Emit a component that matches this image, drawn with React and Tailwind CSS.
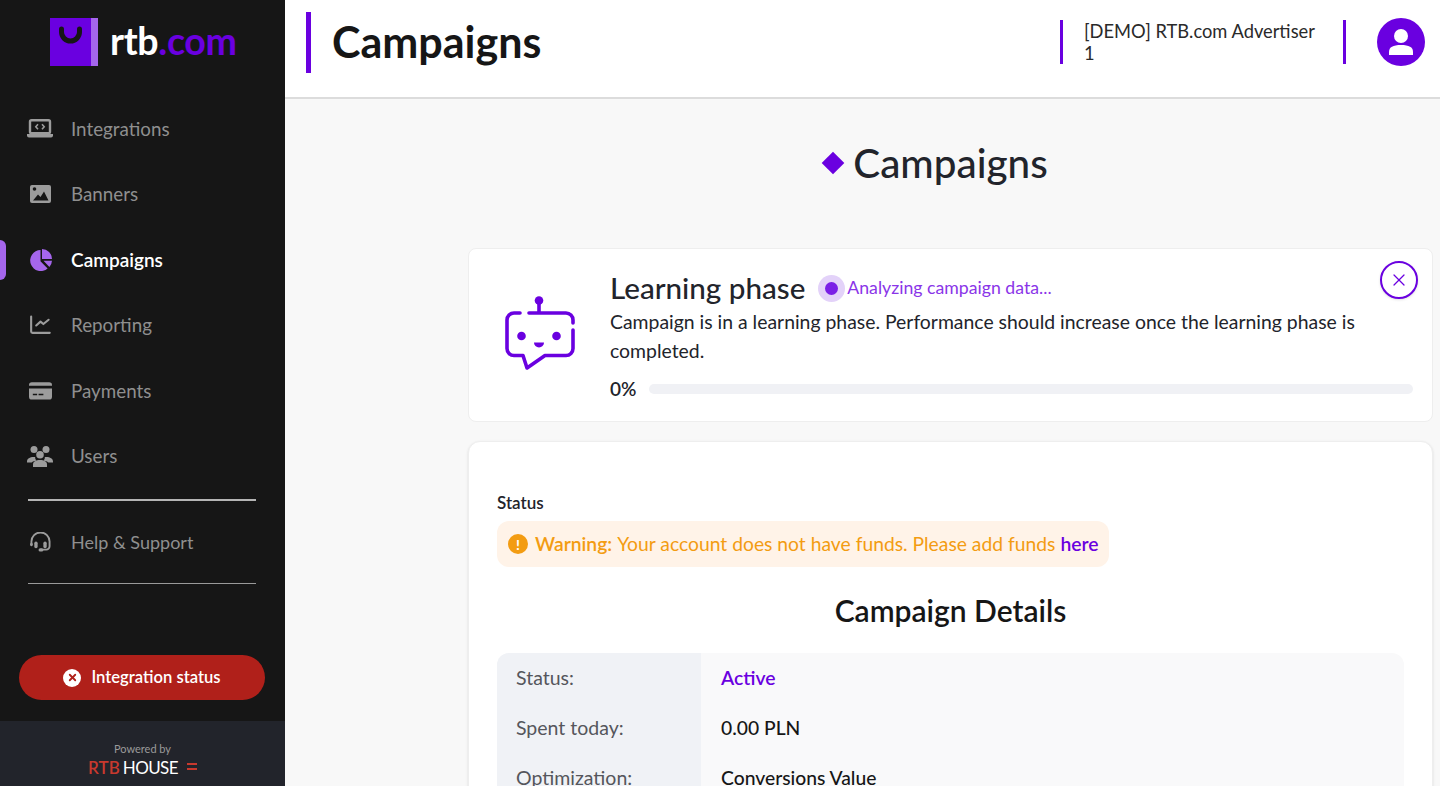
import { X } from 'lucide-react';

const font = { fontFamily: 'Lato, "Noto Sans", sans-serif' };

function LaptopIcon() {
  return (
    <svg width="26" height="19" viewBox="0 0 26 19" fill="none" stroke="currentColor">
      <rect x="3" y="1.200" width="20" height="13" rx="1.500" strokeWidth="2.400" />
      <path d="M11 5.200 8.800 7.700l2.200 2.500M15 5.200l2.200 2.500-2.200 2.500" strokeWidth="1.600" />
      <path d="M0 15h26v1.500a2 2 0 0 1-2 2H2a2 2 0 0 1-2-2z" fill="currentColor" stroke="none" />
    </svg>
  );
}

function ImageIcon() {
  return (
    <svg width="21" height="18" viewBox="0 0 21 18" className="ml-[3px]">
      <rect width="21" height="18" rx="2" fill="currentColor" />
      <circle cx="4.500" cy="4" r="1.800" fill="#161616" />
      <path d="M3 15.500 8 9.500l2.500 2.500 3.500-5.500 4.500 9z" fill="#161616" />
    </svg>
  );
}

function PieIcon() {
  return (
    <svg width="22" height="22" viewBox="0 0 22 22" fill="#a566ec" className="ml-[3px]">
      <path d="M10.500 1A10.500 10.500 0 1 0 17.600 19.400L10.500 12.300z" />
      <path d="M12 0A10 10 0 0 1 22 10H12z" />
      <path d="M13.500 11.800H22A10 10 0 0 1 19.400 18z" />
    </svg>
  );
}

function ChartIcon() {
  return (
    <svg width="21" height="20" viewBox="0 0 22 20" fill="none" stroke="currentColor" strokeWidth="2.200" strokeLinecap="round" strokeLinejoin="round" className="ml-[3px]">
      <path d="M1.200 1.200v15.500a1.500 1.500 0 0 0 1.500 1.500h18" />
      <path d="M6.500 10.500 11 6.500l3 2.500 5.500-4.500" />
    </svg>
  );
}

function CardIcon() {
  return (
    <svg width="23" height="19" viewBox="0 0 24 19" className="ml-[2px]">
      <path d="M0 4a3 3 0 0 1 3-3h18a3 3 0 0 1 3 3v.500H0z" fill="currentColor" />
      <path d="M0 7.500h24V16a3 3 0 0 1-3 3H3a3 3 0 0 1-3-3z" fill="currentColor" />
      <path d="M4 13h4.500v1.500H4zM10 13h5v1.500h-5z" fill="#161616" />
    </svg>
  );
}

function UsersIcon() {
  return (
    <svg width="26" height="21" viewBox="0 0 26 21" fill="currentColor">
      <circle cx="7" cy="3.500" r="3.500" />
      <circle cx="19" cy="3.500" r="3.500" />
      <circle cx="13" cy="8.800" r="3.800" />
      <path d="M6 21v-2.500c0-3 3-4.500 7-4.500s7 1.500 7 4.500V21z" />
      <path d="M0 15.500c0-3 3-4.500 6.500-4.500h1.700c-.2 1.500.3 2.700 1.300 3.500-2.200.5-3.700 1-4.800 2H0z" />
      <path d="M26 15.500c0-3-3-4.500-6.500-4.500h-1.700c.2 1.500-.3 2.700-1.300 3.500 2.200.5 3.700 1 4.800 2H26z" />
    </svg>
  );
}

function HeadsetIcon() {
  return (
    <svg width="21" height="21" viewBox="0 0 22 22" fill="none" stroke="currentColor" strokeWidth="2" strokeLinecap="round" className="ml-[3px]">
      <path d="M1.500 14v-4a9.500 9.500 0 0 1 19 0v5a3.500 3.500 0 0 1-3.500 3.500h-5" />
      <circle cx="1.500" cy="13" r="0.500" />
      <rect x="4.500" y="10" width="3.500" height="7" rx="1.700" fill="currentColor" stroke="none" />
      <rect x="14" y="10" width="3.500" height="7" rx="1.700" fill="currentColor" stroke="none" />
      <rect x="9" y="17" width="5" height="3.500" rx="1.700" fill="currentColor" stroke="none" />
    </svg>
  );
}

const navItems = [
  { label: 'Integrations', icon: <LaptopIcon /> },
  { label: 'Banners', icon: <ImageIcon /> },
  { label: 'Campaigns', icon: <PieIcon />, active: true },
  { label: 'Reporting', icon: <ChartIcon /> },
  { label: 'Payments', icon: <CardIcon /> },
  { label: 'Users', icon: <UsersIcon /> },
];

function NavItem({ item }) {
  return (
    <div className={`relative flex h-[65.5px] items-center pl-[27px] ${item.active ? 'text-[19px] font-semibold text-white' : 'text-[18.8px] text-[#8f8f8f]'}`}>
      {item.active && <div className="absolute left-0 top-[13px] h-10 w-[6px] rounded-r-md bg-[#a566ec]" />}
      <span className="flex w-[44px] shrink-0 items-center text-[#9c9c9c]">{item.icon}</span>
      {item.label}
    </div>
  );
}

function Sidebar() {
  return (
    <aside className="flex h-full w-[285px] shrink-0 flex-col bg-[#161616]">
      <div className="flex h-[96.2px] items-start gap-[12px] pl-[50px] pt-[18px]">
        <svg width="48" height="48" viewBox="0 0 48 48">
          <rect width="48" height="48" fill="#6a00e0" />
          <rect x="41" width="7" height="48" fill="#a566ec" />
          <path d="M11.500 11v3a9 9 0 0 0 18 0v-3" fill="none" stroke="#161616" strokeWidth="5" strokeLinecap="round" />
        </svg>
        <span className="mt-px text-[37.5px] font-bold leading-[44px] tracking-[-0.3px] text-white">
          rtb<span className="text-[#6a00e0]">.com</span>
        </span>
      </div>
      <nav>
        {navItems.map((item) => (
          <NavItem key={item.label} item={item} />
        ))}
      </nav>
      <div className="ml-7 mr-[29px] mt-[10px] h-[2px] bg-[#b5b5b5]" />
      <div className="flex h-[82px] items-center pl-[27px] text-[18px] text-[#8f8f8f]">
        <span className="flex w-[44px] shrink-0 items-center text-[#9c9c9c]">
          <HeadsetIcon />
        </span>
        Help &amp; Support
      </div>
      <div className="ml-7 mr-[29px] h-px bg-[#9a9a9a]" />
      <div className="flex flex-1 items-end justify-center pb-[21px] pr-px">
        <div className="flex h-[45px] w-[246px] items-center justify-center gap-[10px] rounded-full bg-[#b0201a] text-[16.6px] font-semibold text-white">
          <span className="flex h-[18px] w-[18px] items-center justify-center rounded-full bg-white">
            <X size={11} strokeWidth={4} className="text-[#b0201a]" />
          </span>
          Integration status
        </div>
      </div>
      <div className="flex h-[65px] flex-col items-center bg-[#22242b] pt-[22px]">
        <span className="text-[11px] leading-[12px] text-[#9a9a9a]">Powered by</span>
        <div className="mt-[2px] flex items-center text-[17px] leading-[22px]">
          <span className="font-semibold text-[#c8392e]">RTB</span>
          <span className="ml-[3px] tracking-[-0.6px] text-white">HOUSE</span>
          <span className="mb-[4px] ml-[9px] flex flex-col gap-[3px]">
            <span className="h-[2px] w-[10px] bg-[#c8392e]" />
            <span className="h-[2px] w-[10px] bg-[#c8392e]" />
          </span>
        </div>
      </div>
    </aside>
  );
}

function Header() {
  return (
    <header className="flex h-[99px] shrink-0 items-center border-b-2 border-[#dcdcdc] bg-white pb-[13px] pl-[21px] pr-[15px]">
      <div className="h-[61px] w-[5px] bg-[#6a00e0]" />
      <h1 className="ml-[21px] flex-1 text-[43px] font-bold text-[#161616]">Campaigns</h1>
      <div className="h-11 w-[3px] bg-[#6a00e0]" />
      <div className="ml-[21px] w-[233px] text-[18.3px] leading-[22px] text-[#2a2a2a]">
        [DEMO] RTB.com Advertiser 1
      </div>
      <div className="ml-[26px] h-11 w-[3px] bg-[#6a00e0]" />
      <div className="ml-[31px] flex h-12 w-12 items-center justify-center rounded-full bg-[#6a00e0]">
        <svg width="26" height="28" viewBox="0 0 26 28" fill="white">
          <circle cx="13" cy="8" r="7" />
          <path d="M1 27v-3c0-5 4-7 12-7s12 2 12 7v3z" />
        </svg>
      </div>
    </header>
  );
}

function BotIcon() {
  return (
    <svg width="70" height="74" viewBox="0 0 70 74" fill="none" stroke="#6a00e0" strokeWidth="3.600" strokeLinecap="round" strokeLinejoin="round">
      <circle cx="34" cy="4.500" r="4.300" fill="#6a00e0" stroke="none" />
      <path d="M34 8v8" />
      <path d="M15 17H9a7 7 0 0 0-7 7v28.500a7 7 0 0 0 7 7h9L22 72l18-12.500h21a7 7 0 0 0 7-7V34" />
      <path d="M24 17h37a7 7 0 0 1 7 7v3" />
      <circle cx="16.500" cy="40" r="4.300" fill="#6a00e0" stroke="none" />
      <circle cx="51.500" cy="40" r="4.300" fill="#6a00e0" stroke="none" />
      <path d="M29 46.500h10a5 5 0 0 1-10 0z" fill="#6a00e0" stroke="none" />
    </svg>
  );
}

function LearningCard() {
  return (
    <section className="relative flex h-[174px] rounded-lg border border-[#eeeeee] bg-white pl-[36px]">
      <div className="w-[105px] shrink-0 pt-[47px]">
        <BotIcon />
      </div>
      <div className="flex-1 pr-[19px] pt-[20px]">
        <div className="flex h-[38px] items-center">
          <h3 className="text-[29.6px] font-medium text-[#22242b]">Learning phase</h3>
          <span className="ml-[13px] flex h-[27px] w-[27px] items-center justify-center rounded-full bg-[#e3d2f9]">
            <span className="h-[13px] w-[13px] rounded-full bg-[#7a1fe6]" />
          </span>
          <span className="ml-[2px] text-[17.7px] text-[#8a35e8]">Analyzing campaign data...</span>
        </div>
        <p className="text-[19.4px] leading-[29px] text-[#22242b]">
          Campaign is in a learning phase. Performance should increase once the learning phase is completed.
        </p>
        <div className="mt-[10px] flex items-center">
          <span className="w-[39px] text-[19px] font-semibold text-[#22242b]">0%</span>
          <div className="h-[10px] flex-1 rounded-full bg-[#f0f1f5]" />
        </div>
      </div>
      <button className="absolute right-[14px] top-[12px] flex h-[38px] w-[38px] items-center justify-center rounded-full border-[2.5px] border-[#6a00e0] bg-white text-[#6a00e0] shadow-sm">
        <X size={20} strokeWidth={1.5} />
      </button>
    </section>
  );
}

const rows = [
  { label: 'Status:', value: 'Active', cls: 'font-semibold text-[#6a00e0]' },
  { label: 'Spent today:', value: '0.00 PLN', cls: 'font-medium text-[#161616]' },
  { label: 'Optimization:', value: 'Conversions Value', cls: 'font-medium text-[#161616]' },
];

function DetailsCard() {
  return (
    <section className="mt-[19px] rounded-t-xl border border-[#eeeeee] bg-white px-[28px] pb-10 pt-[51px] shadow-sm">
      <div className="text-[17px] font-semibold leading-5 text-[#22242b]">Status</div>
      <div className="mt-2 flex h-[46px] w-[612px] items-center rounded-xl bg-[#fff3e8] pl-[11px] text-[19.3px] text-[#f39c12]">
        <span className="mr-[7px] flex h-5 w-5 items-center justify-center rounded-full bg-[#f39c12] text-[14px] font-bold text-white">!</span>
        <span className="font-semibold">Warning:</span>
        <span className="ml-[5px]">Your account does not have funds. Please add funds</span>
        <span className="ml-[5px] font-semibold text-[#6a00e0]">here</span>
      </div>
      <h2 className="mt-[21px] text-center text-[30px] font-semibold leading-[44px] text-[#161616]">Campaign Details</h2>
      <div className="mt-[21px] overflow-hidden rounded-xl bg-[#f9f9fa]">
        {rows.map((row) => (
          <div key={row.label} className="flex h-[50px] items-center text-[19.3px]">
            <div className="flex h-full w-[204px] items-center bg-[#f0f2f6] pl-[19px] text-[19.5px] text-[#55565c]">{row.label}</div>
            <div className={`pl-5 ${row.cls}`}>{row.value}</div>
          </div>
        ))}
      </div>
    </section>
  );
}

export default function App() {
  return (
    <div style={font} className="flex h-screen overflow-hidden bg-[#f8f8f8]">
      <Sidebar />
      <div className="flex min-w-0 flex-1 flex-col">
        <Header />
        <main className="flex-1 overflow-hidden pl-[183px] pr-[7px]">
          <div className="flex h-[149px] items-start justify-center pt-[39px]">
            <h2 className="flex items-center text-[40.4px] font-medium leading-[50px] text-[#22242b]">
              <span className="-ml-[28px] mr-[12px] h-4 w-4 rotate-45 bg-[#6a00e0]" />
              Campaigns
            </h2>
          </div>
          <LearningCard />
          <DetailsCard />
        </main>
      </div>
    </div>
  );
}
